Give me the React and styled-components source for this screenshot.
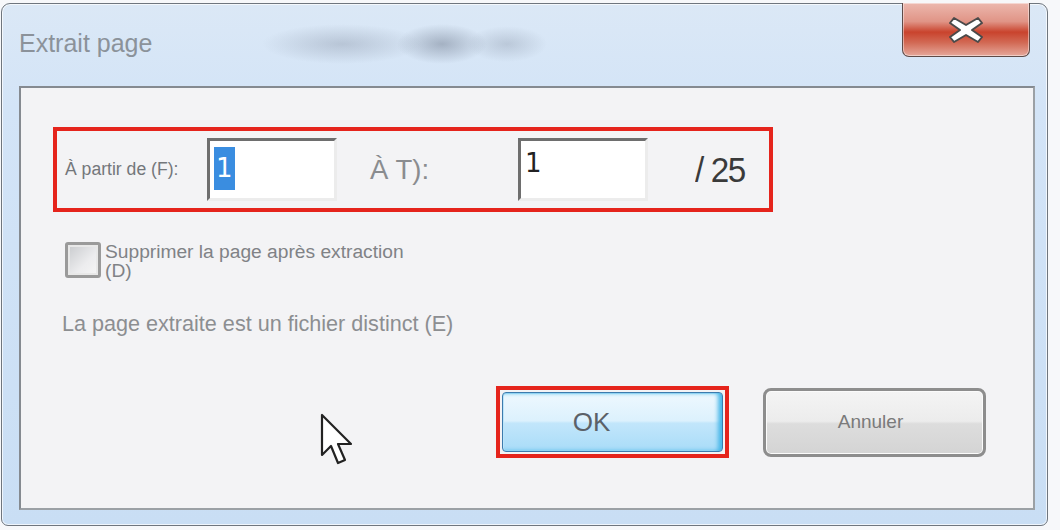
import React from 'react';
import styled, { createGlobalStyle } from 'styled-components';

const GlobalStyle = createGlobalStyle`
  html, body {
    margin: 0;
    padding: 0;
    background: #f7f8fa;
  }
  body {
    font-family: "Liberation Sans", Arial, sans-serif;
  }
`;

// Win7 style outer frame
const Window = styled.div`
  box-sizing: border-box;
  width: 1047px;
  height: 523px;
  margin: 3px 0 0 1px;
  display: flex;
  flex-direction: column;
  padding: 0 12px 15px 17px;
  border: 1px solid #6f767e;
  border-radius: 9px 9px 7px 7px;
  background:
    radial-gradient(ellipse 80px 20px at 340px 40px, rgba(110, 120, 140, 0.3), transparent),
    radial-gradient(ellipse 45px 20px at 440px 40px, rgba(80, 90, 110, 0.38), transparent),
    radial-gradient(ellipse 40px 18px at 505px 40px, rgba(100, 110, 130, 0.25), transparent),
    linear-gradient(180deg, #dbe8f6 0%, #d3e4f7 20%, #c9def4 100%);
  box-shadow: inset 0 0 0 1px rgba(255, 255, 255, 0.7);
`;

const TitleBar = styled.div`
  height: 82px;
  display: flex;
  justify-content: space-between;
  align-items: flex-start;
  flex-shrink: 0;
`;

const Title = styled.div`
  padding-top: 25px;
  font-size: 25px;
  color: #8b929a;
`;

const CloseButton = styled.div`
  width: 128px;
  height: 54px;
  margin: -1px 5px 0 0;
  display: flex;
  align-items: center;
  justify-content: center;
  box-sizing: border-box;
  border: 1px solid #5e4b48;
  border-top: none;
  border-radius: 0 0 7px 7px;
  background: linear-gradient(180deg, #ecb8ae 0%, #e09486 35%, #c9432d 55%, #d26a55 75%, #e6a89b 100%);
  box-shadow: inset 0 0 0 1px rgba(255, 255, 255, 0.45);
`;

const Panel = styled.div`
  position: relative;
  flex: 1;
  display: flex;
  flex-direction: column;
  align-items: flex-start;
  padding: 39px 0 0 32px;
  background: #f3f3f5;
  border: 2px solid #858a90;
  border-right-color: #9ba0a5;
  border-bottom-color: #9ba0a5;
`;

const RangeBox = styled.div`
  box-sizing: border-box;
  width: 720px;
  height: 85px;
  display: flex;
  align-items: center;
  padding-left: 8px;
  border: 4px solid #e5241c;
`;

const Label = styled.span`
  width: ${(p) => p.$width}px;
  margin-left: ${(p) => p.$gap || 0}px;
  font-size: ${(p) => p.$size}px;
  color: ${(p) => p.$color || '#74777b'};
  flex-shrink: 0;
`;

const Field = styled.div`
  box-sizing: border-box;
  width: 130px;
  height: 63px;
  padding: 6px 0 0 4px;
  background: #ffffff;
  border: 3px solid;
  border-color: #6e6e6e #ececec #ececec #6e6e6e;
  font-family: "DejaVu Sans", sans-serif;
  font-size: 26px;
  line-height: 32px;
  color: #222;
  flex-shrink: 0;
`;

const Selected = styled.span`
  display: inline-block;
  padding: 5px 2px 6px;
  background: #3a8de0;
  color: #ffffff;
`;

const Total = styled.span`
  margin-left: 47px;
  font-size: 35px;
  color: #3a3a3a;
  letter-spacing: -1.5px;
  transform: scaleX(0.95);
  transform-origin: left center;
`;

const CheckRow = styled.label`
  display: flex;
  align-items: flex-start;
  gap: 4px;
  margin: 30px 0 0 12px;
`;

const CheckBox = styled.span`
  box-sizing: border-box;
  width: 36px;
  height: 36px;
  border: 3px solid #9a9a9a;
  border-radius: 3px;
  background: linear-gradient(135deg, #c8cacd 0%, #ececee 60%, #f6f6f6 100%);
  box-shadow: inset 0 0 0 2px #e8e8e8;
  flex-shrink: 0;
`;

const CheckText = styled.span`
  width: 320px;
  font-size: 19.2px;
  line-height: 19px;
  color: #808286;
`;

const Note = styled.div`
  margin: 31px 0 0 9px;
  font-size: 21.6px;
  color: #8c8e91;
`;

const ButtonRow = styled.div`
  display: flex;
  align-items: center;
  gap: 34px;
  margin: 49px 0 0 443px;
`;

const FocusMark = styled.div`
  box-sizing: border-box;
  width: 233px;
  height: 72px;
  padding: 2px;
  border: 4px solid #e5241c;
`;

const Button = styled.div`
  box-sizing: border-box;
  width: ${(p) => (p.$primary ? '100%' : '223px')};
  height: ${(p) => (p.$primary ? '100%' : '69px')};
  display: flex;
  align-items: center;
  justify-content: center;
  padding-right: ${(p) => (p.$primary ? '42px' : '8px')};
  border-radius: ${(p) => (p.$primary ? '4px' : '8px')};
  font-size: ${(p) => (p.$primary ? '26px' : '19px')};
  color: ${(p) => (p.$primary ? '#5b6168' : '#7a7a7a')};
  border: ${(p) => (p.$primary ? '1px solid #3d7bad' : '3px solid #8d8d8d')};
  background: ${(p) =>
    p.$primary
      ? 'linear-gradient(180deg, #eef8fe 0%, #dcf1fd 48%, #c2e6fb 52%, #a9dcf8 100%)'
      : 'linear-gradient(180deg, #f4f4f4 0%, #ececec 48%, #dddddd 52%, #d4d4d4 100%)'};
  box-shadow: ${(p) =>
    p.$primary
      ? 'inset -4px 0 4px #49b7e8, inset 0 0 0 1px #bfe7fb'
      : 'inset 0 0 0 1px #fbfbfb'};
`;

const Cursor = styled.svg`
  position: absolute;
  left: 299px;
  top: 325px;
  width: 38px;
  height: 56px;
`;

export default function App() {
  return (
    <>
      <GlobalStyle />
      <Window>
        <TitleBar>
          <Title>Extrait page</Title>
          <CloseButton>
            <svg width="40" height="32" viewBox="0 0 40 32">
              <path
                d="M8 4 L20 11 L32 4 L36 9 L26 16 L36 23 L32 28 L20 21 L8 28 L4 23 L14 16 L4 9 Z"
                fill="#ffffff"
                stroke="#4a4a4a"
                strokeWidth="2"
                strokeLinejoin="round"
              />
            </svg>
          </CloseButton>
        </TitleBar>
        <Panel>
          <RangeBox>
            <Label $width={142} $size={17.6}>À partir de (F):</Label>
            <Field>
              <Selected>1</Selected>
            </Field>
            <Label $width={148} $gap={33} $size={27.5} $color="#8a8c8f">À T):</Label>
            <Field>1</Field>
            <Total>/ 25</Total>
          </RangeBox>

          <CheckRow>
            <CheckBox />
            <CheckText>Supprimer la page après extraction (D)</CheckText>
          </CheckRow>

          <Note>La page extraite est un fichier distinct (E)</Note>

          <ButtonRow>
            <FocusMark>
              <Button $primary>OK</Button>
            </FocusMark>
            <Button>Annuler</Button>
          </ButtonRow>

          <Cursor viewBox="0 0 38 56">
            <path
              d="M2 2 L2 42 L11 33 L18 50 L25 47 L18 31 L31 31 Z"
              fill="#ffffff"
              stroke="#222222"
              strokeWidth="2.2"
              strokeLinejoin="round"
            />
          </Cursor>
        </Panel>
      </Window>
    </>
  );
}
